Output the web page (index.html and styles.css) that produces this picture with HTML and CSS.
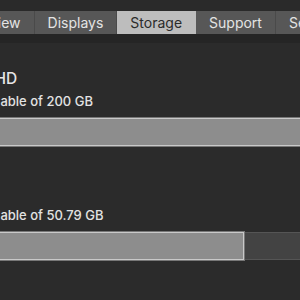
FILE: index.html
```html
<!DOCTYPE html>
<html>
<head>
<meta charset="utf-8">
<link rel="stylesheet" href="styles.css">
</head>
<body>
<div class="window">
  <div class="titlebar"></div>
  <div class="tabs">
    <div class="tab">Overview</div>
    <div class="tab">Displays</div>
    <div class="tab selected">Storage</div>
    <div class="tab">Support</div>
    <div class="tab">Service</div>
  </div>
  <div class="tabs-shadow"></div>
  <div class="panel">
    <div class="disk">
      <div class="disk-name">Macintosh HD</div>
      <div class="disk-avail">12.34 GB available of 200 GB</div>
      <div class="bar"><div class="used" style="width: 100%"></div></div>
    </div>
    <div class="disk second">
      <div class="disk-name">&nbsp;</div>
      <div class="disk-avail">12.34 GB available of 50.79 GB</div>
      <div class="bar"><div class="used" style="width: 331px"></div></div>
    </div>
  </div>
</div>
</body>
</html>
```
FILE: styles.css
```css
html, body {
  margin: 0;
  padding: 0;
  background: #2b2b2b;
  overflow: hidden;
  font-family: Inter, "Liberation Sans", sans-serif;
}
.window {
  width: 300px;
  height: 300px;
  overflow: hidden;
}
.titlebar {
  height: 11px;
  background: #2a2a2a;
}
.tabs {
  display: flex;
  height: 23px;
  margin-left: -55px;
  background: #575757;
}
.tab {
  flex: none;
  padding: 0 13px;
  line-height: 24px;
  font-size: 14px;
  color: #e4e4e4;
  background: #575757;
  border-right: 1px solid #4a4a4a;
}
.tab.selected {
  background: #bdbdbd;
  color: #2b2b2b;
  border-right-color: #bdbdbd;
}
.tabs-shadow {
  height: 9px;
  background: #252525;
}
.panel {
  margin-left: -87px;
  margin-right: -40px;
  padding-top: 26px;
}
.disk-name {
  font-size: 15.5px;
  font-weight: 500;
  color: #e6e6e6;
  line-height: 20px;
}
.disk-avail {
  margin-top: 4px;
  font-size: 13px;
  font-weight: 500;
  color: #e2e2e2;
  line-height: 17px;
}
.bar {
  margin-top: 8px;
  height: 26px;
  background: #434343;
  border: 1px solid #555555;
  display: flex;
}
.used {
  box-sizing: border-box;
  background: #8d8d8d;
  border: 1px solid #c9c9c9;
  box-shadow: 0 0 0 1px #777;
  margin: -1px 0 0 -1px;
  height: 28px;
}
.second {
  margin-top: 37px;
}
```
